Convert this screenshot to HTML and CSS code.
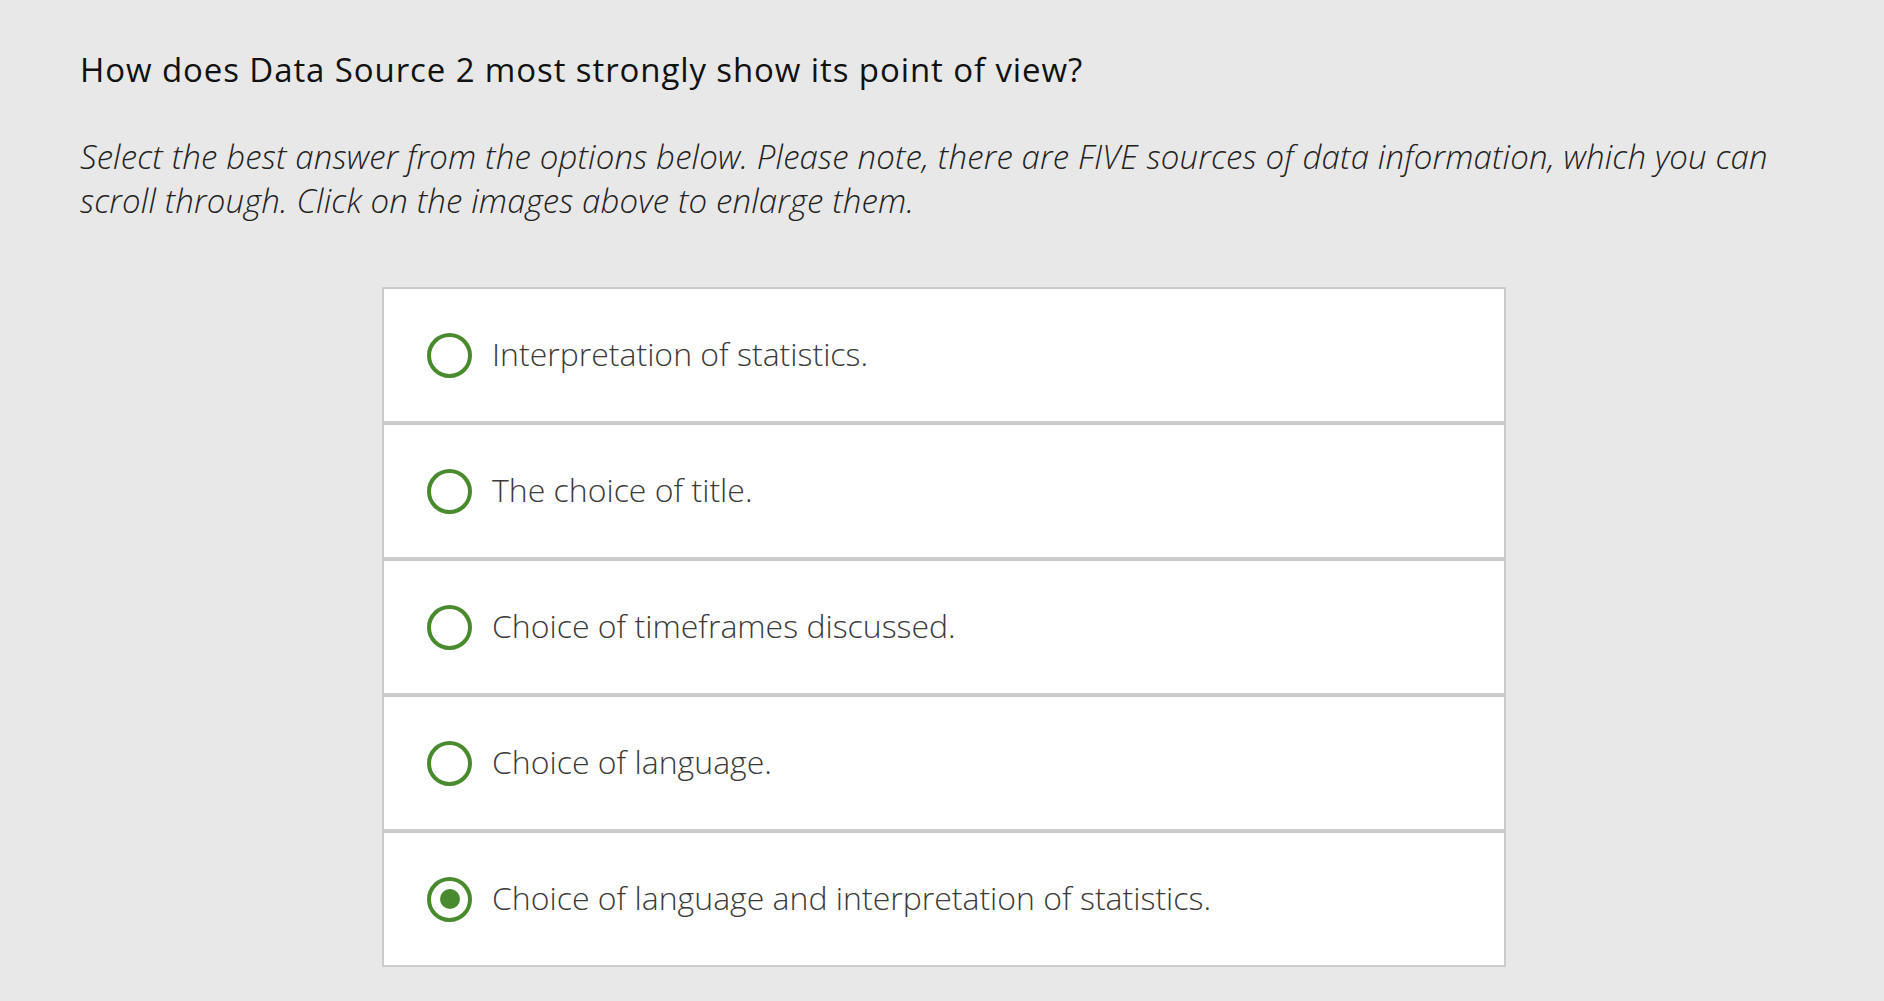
FILE: index.html
```html
<!DOCTYPE html>
<html lang="en">
<head>
<meta charset="utf-8">
<title>Question</title>
<link rel="stylesheet" href="styles.css">
</head>
<body>
<main class="page">
  <h1 class="question">How does Data Source 2 most strongly show its point of view?</h1>
  <p class="instructions">Select the best answer from the options below. Please note, there are FIVE sources of data information, which you can scroll through. Click on the images above to enlarge them.</p>
  <ul class="options">
    <li class="option"><span class="radio"></span><span class="label">Interpretation of statistics.</span></li>
    <li class="option"><span class="radio"></span><span class="label">The choice of title.</span></li>
    <li class="option"><span class="radio"></span><span class="label">Choice of timeframes discussed.</span></li>
    <li class="option"><span class="radio"></span><span class="label">Choice of language.</span></li>
    <li class="option selected"><span class="radio"></span><span class="label">Choice of language and interpretation of statistics.</span></li>
  </ul>
</main>
</body>
</html>
```

FILE: styles.css
```css
html, body {
  margin: 0;
  padding: 0;
  background: #e7e8e7;
}
body {
  font-family: "Open Sans", "Liberation Sans", sans-serif;
  color: #222;
}
.page {
  padding: 44px 76px 0 80px;
}
.question {
  margin: 0;
  font-size: 33px;
  font-weight: 370;
  line-height: 52px;
  letter-spacing: 0.9px;
  color: #111;
}
.instructions {
  margin: 39px 0 0 0;
  font-size: 33px;
  font-style: italic;
  font-weight: 300;
  line-height: 44px;
  letter-spacing: 0.15px;
  color: #222;
}
.options {
  list-style: none;
  margin: 64px auto 0 auto;
  padding: 0;
  width: 1124px;
}
.option {
  box-sizing: border-box;
  height: 136px;
  border: 2px solid #cbcbcb;
  background: #fff;
  display: flex;
  align-items: center;
  padding-left: 43px;
}
.radio {
  box-sizing: border-box;
  width: 45px;
  height: 45px;
  border: 4.5px solid #4a8a2e;
  border-radius: 50%;
  display: flex;
  align-items: center;
  justify-content: center;
  flex: none;
}
.selected .radio::after {
  content: "";
  width: 20px;
  height: 20px;
  border-radius: 50%;
  background: #4a8a2e;
}
.label {
  margin-left: 20px;
  padding-bottom: 3px;
  font-size: 32px;
  font-weight: 300;
  color: #3a3a3a;
}
```
